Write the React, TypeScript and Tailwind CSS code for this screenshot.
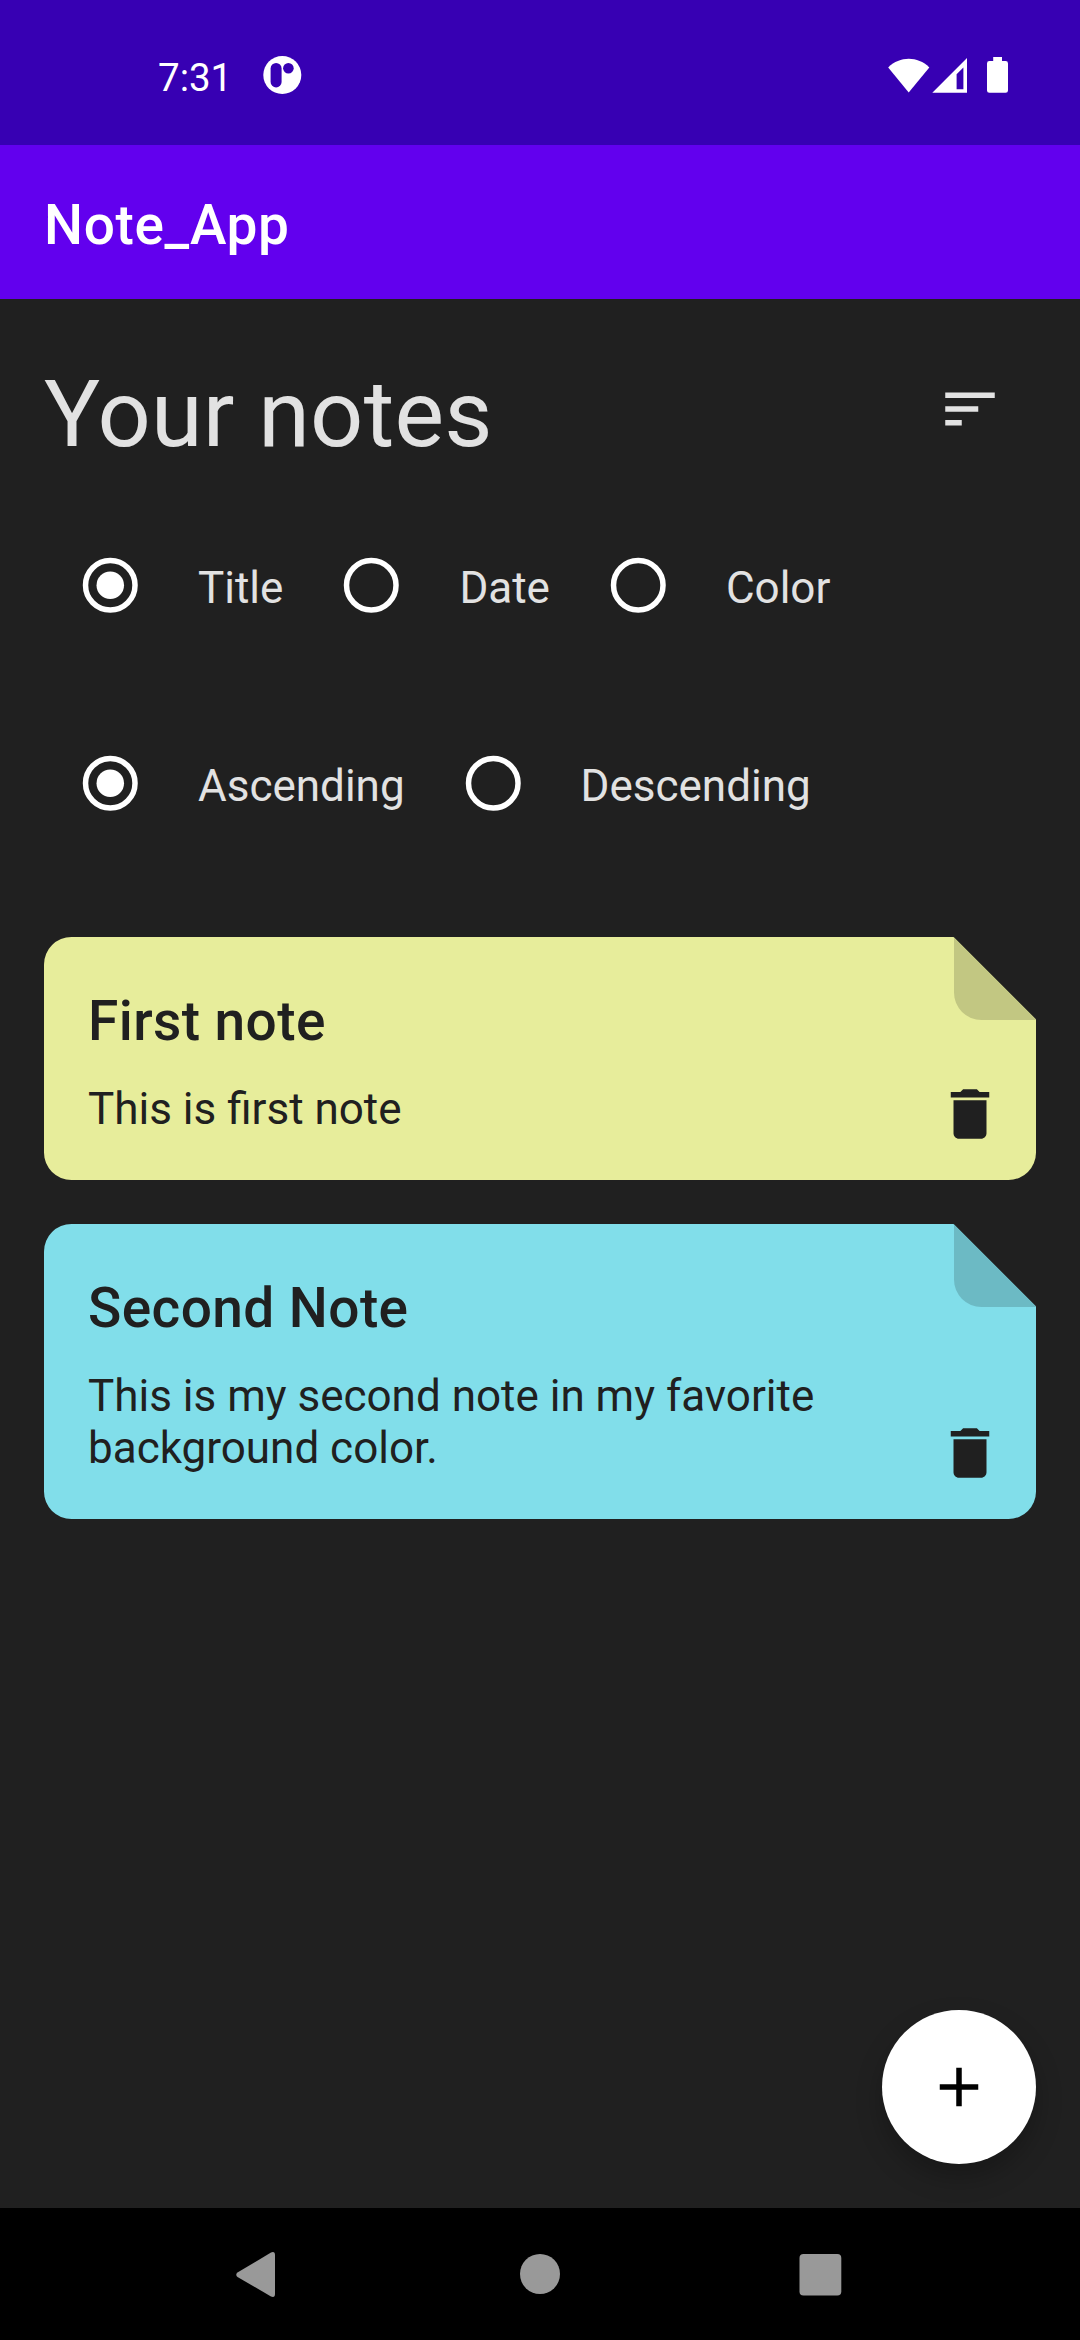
import React from "react";

function StatusBar() {
  return (
    <header className="flex h-[145px] shrink-0 items-start bg-[#3700b3] text-white">
      <span className="ml-[158px] mt-[55px] w-[104px] text-[38.5px] leading-[46px]">7:31</span>
      <svg className="mt-[55px] h-10 w-10" viewBox="0 0 40 40">
        <circle cx="20.3" cy="20" r="19" fill="#fff" />
        <rect x="8.6" y="8" width="11" height="24.4" rx="5.5" fill="#3700b3" />
        <circle cx="26.4" cy="13.3" r="5.3" fill="#3700b3" />
      </svg>
      <div className="ml-auto mr-[72px] mt-[56px] flex">
        <svg className="h-10 w-[42px]" viewBox="0 0 42 40">
          <path d="M0.2 11.4 C12 -.1 29.5 -.1 41.3 11.4 L20.7 36.5 Z" fill="#fff" />
        </svg>
        <svg className="ml-[2px] h-10 w-[36px]" viewBox="0 0 36 40">
          <path d="M0.3 36.8 L35 2 V36.8 Z M24.6 18.3 V33.3 H31.4 V11.5 Z" fill="#fff" fillRule="evenodd" />
        </svg>
        <svg className="ml-[19px] h-10 w-[21px]" viewBox="0 0 21 40">
          <path d="M6.2 1 H15 V5 H18.6 Q21 5 21 7.4 V34.4 Q21 36.8 18.6 36.8 H2.4 Q0 36.8 0 34.4 V7.4 Q0 5 2.4 5 H6.2 Z" fill="#fff" />
        </svg>
      </div>
    </header>
  );
}

function Radio({ label, checked = false }: { label: string; checked?: boolean }) {
  return (
    <label className="flex h-[132px] items-center">
      <span className="flex w-[132px] items-center justify-center">
        <svg className="h-[66px] w-[66px]" viewBox="0 0 24 24">
          <circle cx="12.1" cy="12.1" r="9" fill="none" stroke="#fff" strokeWidth="2" />
          {checked && <circle cx="12.1" cy="12.1" r="5" fill="#fff" />}
        </svg>
      </span>
      <span className="ml-[22px] mt-[5px] text-[44px] leading-[52px] text-[#e2e2e2]">{label}</span>
    </label>
  );
}

type Note = { title: string; body: string; height: string; color: string; fold: string };

const notes: Note[] = [
  { title: "First note", body: "This is first note", height: "h-[243px]", color: "#e7ed9b", fold: "#c2c782" },
  {
    title: "Second Note",
    body: "This is my second note in my favorite background color.",
    height: "h-[295px]",
    color: "#81deea",
    fold: "#6cbac4",
  },
];

function NoteCard({ note }: { note: Note }) {
  return (
    <article
      className={`relative flex items-end overflow-hidden rounded-[27.5px] text-[#202020] [clip-path:polygon(0_0,calc(100%-82.5px)_0,100%_82.5px,100%_100%,0_100%)] ${note.height}`}
      style={{ backgroundColor: note.color }}
    >
      <div
        className="absolute right-0 top-0 h-[82.5px] w-[82.5px] rounded-bl-[27.5px]"
        style={{ backgroundColor: note.fold }}
      />
      <div className="flex-1 self-stretch pl-[44px] pt-[51px]">
        <h2 className="text-[55px] font-medium leading-[66px] tracking-[0.4125px]">{note.title}</h2>
        <p className="mt-[29px] text-[44px] leading-[52px]">{note.body}</p>
      </div>
      <button className="flex h-[132px] w-[132px] items-center justify-center" aria-label="Delete note">
        <svg className="h-[66px] w-[66px]" viewBox="0 0 24 24" fill="#202020">
          <path d="M6 19c0 1.100.9 2 2 2h8c1.100 0 2-.9 2-2V7H6v12zM19 4h-3.500l-1-1h-5l-1 1H5v2h14V4z" />
        </svg>
      </button>
    </article>
  );
}

export default function App() {
  return (
    <div className="flex h-[2340px] w-[1080px] flex-col overflow-hidden bg-[#202020] font-[Roboto,sans-serif]">
      <StatusBar />
      <div className="flex h-[154px] shrink-0 items-center bg-[#6200ee] pl-[44px]">
        <h1 className="mt-[6px] text-[55px] font-medium leading-[66px] tracking-[0.65px] text-white">Note_App</h1>
      </div>
      <main className="relative flex-1 px-[44px] pt-[44px]">
        <div className="flex h-[132px] items-center justify-between">
          <h2 className="mt-[9px] text-[93.5px] leading-[110px] tracking-[0.25px] text-[#e2e2e2]">Your notes</h2>
          <button className="flex h-[132px] w-[132px] items-center justify-center" aria-label="Sort">
            <svg className="h-[66px] w-[66px]" viewBox="0 0 24 24" fill="#e2e2e2">
              <path d="M3 18h6v-2H3v2zM3 6v2h18V6H3zm0 7h12v-2H3v2z" />
            </svg>
          </button>
        </div>
        <div className="mt-[44px] flex gap-[22px]">
          <Radio label="Title" checked />
          <Radio label="Date" />
          <Radio label="Color" />
        </div>
        <div className="mt-[66px] flex gap-[22px]">
          <Radio label="Ascending" checked />
          <Radio label="Descending" />
        </div>
        <div className="mt-[88px] flex flex-col gap-[44px]">
          {notes.map((note) => (
            <NoteCard key={note.title} note={note} />
          ))}
        </div>
        <button
          className="absolute bottom-[44px] right-[44px] flex h-[154px] w-[154px] items-center justify-center rounded-full bg-white shadow-[0_13px_26px_rgba(0,0,0,0.25)]"
          aria-label="Add note"
        >
          <svg className="h-[66px] w-[66px]" viewBox="0 0 24 24" fill="#000">
            <path d="M19 13h-6v6h-2v-6H5v-2h6V5h2v6h6v2z" />
          </svg>
        </button>
      </main>
      <nav className="relative flex h-[132px] shrink-0 items-center bg-black pl-[234px]">
        <svg className="h-[48px] w-[44px]" viewBox="0 0 44 48" fill="#999">
          <path d="M3.500 22.500 L37 2.500 Q41 1 41 5 V44 Q41 48 37 46.500 L3.500 27 Q1 24.700 3.500 22.500 Z" />
        </svg>
        <svg className="ml-[240px] h-[44px] w-[44px]" viewBox="0 0 44 44">
          <circle cx="22" cy="22" r="20" fill="#999" />
        </svg>
        <svg className="ml-[236px] h-[44px] w-[44px]" viewBox="0 0 44 44">
          <rect x="1.500" y="2" width="41.800" height="41.500" rx="4" fill="#999" />
        </svg>
      </nav>
    </div>
  );
}
